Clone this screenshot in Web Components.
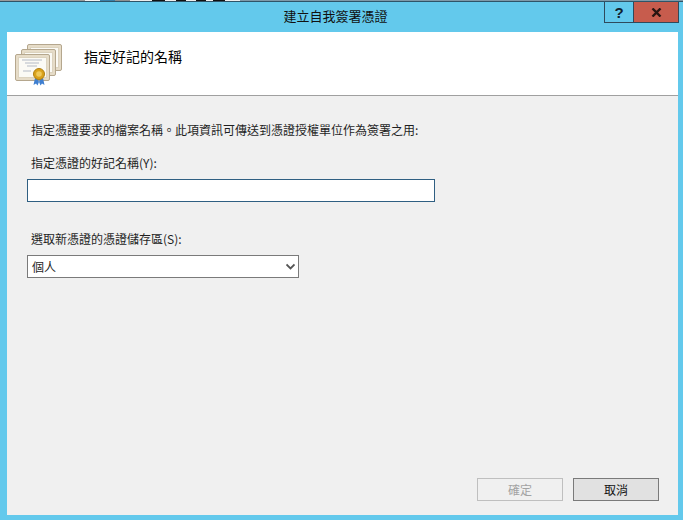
<!DOCTYPE html>
<html lang="zh-Hant">
<head>
<meta charset="utf-8">
<style>
  html, body { margin: 0; height: 100%; }
  body { background: #63c9ec; overflow: hidden; font-family: "Noto Sans CJK TC", "Liberation Sans", sans-serif; color: #1f1f1f; }
</style>
</head>
<body>
<wizard-dialog caption="建立自我簽署憑證">
  <wizard-header slot="header" title-text="指定好記的名稱"></wizard-header>
  <p class="intro" style="margin:0 0 17px 4px;font-size:12px;line-height:16px;">指定憑證要求的檔案名稱。此項資訊可傳送到憑證授權單位作為簽署之用:</p>
  <labeled-field label="指定憑證的好記名稱(Y):" style="margin-bottom:29px"><text-box></text-box></labeled-field>
  <labeled-field label="選取新憑證的憑證儲存區(S):"><combo-box value="個人"></combo-box></labeled-field>
  <dialog-button slot="footer" disabled>確定</dialog-button>
  <dialog-button slot="footer">取消</dialog-button>
</wizard-dialog>

<script>
/*
 * Windows Server style wizard dialog
 */

class WizardDialog extends HTMLElement {

  constructor() {
    super();
    this.attachShadow({ mode: "open" });
    this.shadowRoot.innerHTML = `
    <style>
      :host {
        display: flex;
        flex-direction: column;
        height: 520px;
        box-sizing: border-box;
        padding: 0 0 5px 0;
      }
      .edge {
        flex: 0 0 1px;
        border-bottom: 1px solid #2f5468;
        background: linear-gradient(90deg,
          #9a9a9a 0 85px, #f2f2f2 85px 100px, #3a7fa8 100px 115px, #8f8f8f 115px 130px,
          #ececec 130px 152px, #111 152px 165px, #eee 165px 176px, #111 176px 186px,
          #eee 186px 196px, #111 196px 206px, #eee 206px 213px, #111 213px 225px, #eee 225px 240px,
          #7f99a8 240px);
      }
      .titlebar {
        position: relative;
        flex: 0 0 30px;
        display: flex;
        align-items: center;
        justify-content: center;
        margin: 0 5px 0 7px;
        padding-right: 14px;
        box-sizing: border-box;
        font-size: 13px;
        color: #111;
      }
      .caption { padding-bottom: 4px; }
      .controls {
        position: absolute;
        top: 0;
        right: -1px;
        display: flex;
      }
      .client {
        flex: 1;
        display: flex;
        flex-direction: column;
        margin: 0 5px 0 7px;
        background: #f0f0f0;
        min-height: 0;
      }
      .body {
        flex: 1;
        padding: 26px 20px 0;
      }
      .footer {
        display: flex;
        justify-content: flex-end;
        gap: 10px;
        padding: 0 19px 14px 0;
      }
    </style>
    <div class="edge"></div>
    <div class="titlebar">
      <span class="caption"></span>
      <div class="controls"><caption-button kind="help"></caption-button><caption-button kind="close"></caption-button></div>
    </div>
    <div class="client">
      <slot name="header"></slot>
      <div class="body"><slot></slot></div>
      <div class="footer"><slot name="footer"></slot></div>
    </div>
    `;
  }

  connectedCallback() {
    this.shadowRoot.querySelector(".caption").textContent = this.getAttribute("caption");
  }
}

class CaptionButton extends HTMLElement {

  constructor() {
    super();
    this.attachShadow({ mode: "open" });
  }

  connectedCallback() {
    let close = this.getAttribute("kind") == "close";
    this.shadowRoot.innerHTML = `
    <style>
      :host {
        display: flex;
        align-items: center;
        justify-content: center;
        box-sizing: border-box;
        height: 21px;
        width: ${close ? 46 : 30}px;
        margin-left: ${close ? -1 : 0}px;
        border: 1px solid #2f4a5c;
        border-top: 0;
        background: ${close ? "#c75c4d" : "transparent"};
        font: bold 15px "Liberation Sans", sans-serif;
        color: #10202c;
      }
    </style>
    ${close
      ? `<svg width="11" height="9" viewBox="0 0 11 9"><path d="M1.500 .5l8 8M9.500 .5l-8 8" stroke="#2a1512" stroke-width="2.400" fill="none"/></svg>`
      : `<span>?</span>`}
    `;
  }
}

class WizardHeader extends HTMLElement {

  constructor() {
    super();
    this.attachShadow({ mode: "open" });
    this.shadowRoot.innerHTML = `
    <style>
      :host {
        display: flex;
        align-items: flex-start;
        box-sizing: border-box;
        height: 64px;
        background: #fff;
        border-bottom: 1px solid #a0a0a0;
        padding: 11px 0 0 8px;
      }
      svg { flex: none; }
      h1 {
        margin: 3px 0 0 21px;
        font-size: 14px;
        line-height: 20px;
        font-weight: 400;
        color: #000;
      }
    </style>
    <svg width="48" height="46" viewBox="0 0 48 46">
      <defs>
        <g id="cert">
          <rect x=".5" y=".5" width="34" height="26" rx="1.500" fill="#e6dcc8" stroke="#b5a78e"/>
          <rect x="3.500" y="3.500" width="28" height="20" fill="#fbfaf5" stroke="#dcd3bf"/>
        </g>
      </defs>
      <use href="#cert" x="12" y="1"/>
      <use href="#cert" x="6" y="6"/>
      <use href="#cert" x="0" y="11"/>
      <path d="M7 17h20M10 20h14M12 23h10M8 28h8" stroke="#b4bac6" stroke-width="1" fill="none"/>
      <path d="M20 35l-1.500 7 2.500-1.500 1.500 2 2.500-6zM28 35l1.500 7-2.500-1.500-1.500 2-2.500-6z" fill="#3f7fd0"/>
      <circle cx="24" cy="31" r="5.500" fill="#d9a21c" stroke="#b07f10"/>
      <circle cx="24" cy="31" r="2.800" fill="#efc95a"/>
    </svg>
    <h1></h1>
    `;
  }

  connectedCallback() {
    this.shadowRoot.querySelector("h1").textContent = this.getAttribute("title-text");
  }
}

class LabeledField extends HTMLElement {

  constructor() {
    super();
    this.attachShadow({ mode: "open" });
    this.shadowRoot.innerHTML = `
    <style>
      :host { display: block; }
      label {
        display: block;
        font-size: 12px;
        line-height: 16px;
        margin: 0 0 8px 4px;
      }
    </style>
    <label></label>
    <slot></slot>
    `;
  }

  connectedCallback() {
    this.shadowRoot.querySelector("label").textContent = this.getAttribute("label");
  }
}

class TextBox extends HTMLElement {

  constructor() {
    super();
    this.attachShadow({ mode: "open" });
    this.shadowRoot.innerHTML = `
    <style>
      :host {
        display: block;
        box-sizing: border-box;
        width: 408px;
        height: 23px;
        background: #fff;
        border: 1px solid #2f5f82;
      }
    </style>
    `;
  }
}

class ComboBox extends HTMLElement {

  constructor() {
    super();
    this.attachShadow({ mode: "open" });
    this.shadowRoot.innerHTML = `
    <style>
      :host {
        display: flex;
        align-items: center;
        justify-content: space-between;
        box-sizing: border-box;
        width: 272px;
        height: 23px;
        background: #fff;
        border: 1px solid #7a7a7a;
        padding: 0 3px 0 4px;
        font-size: 12px;
      }
    </style>
    <span></span>
    <svg width="9" height="7" viewBox="0 0 9 7"><path d="M.5 1.500l4 4 4-4" stroke="#555" stroke-width="1.800" fill="none"/></svg>
    `;
  }

  connectedCallback() {
    this.shadowRoot.querySelector("span").textContent = this.getAttribute("value");
  }
}

class DialogButton extends HTMLElement {

  constructor() {
    super();
    this.attachShadow({ mode: "open" });
    this.shadowRoot.innerHTML = `
    <style>
      :host {
        display: flex;
        align-items: center;
        justify-content: center;
        box-sizing: border-box;
        width: 86px;
        height: 23px;
        background: #e1e1e1;
        border: 1px solid #7a7a7a;
        font-size: 12px;
        color: #111;
      }
      :host([disabled]) {
        background: #f0f0f0;
        border-color: #bfbfbf;
        color: #a3a3a3;
      }
    </style>
    <slot></slot>
    `;
  }
}

customElements.define("wizard-dialog", WizardDialog);
customElements.define("caption-button", CaptionButton);
customElements.define("wizard-header", WizardHeader);
customElements.define("labeled-field", LabeledField);
customElements.define("text-box", TextBox);
customElements.define("combo-box", ComboBox);
customElements.define("dialog-button", DialogButton);
</script>
</body>
</html>
